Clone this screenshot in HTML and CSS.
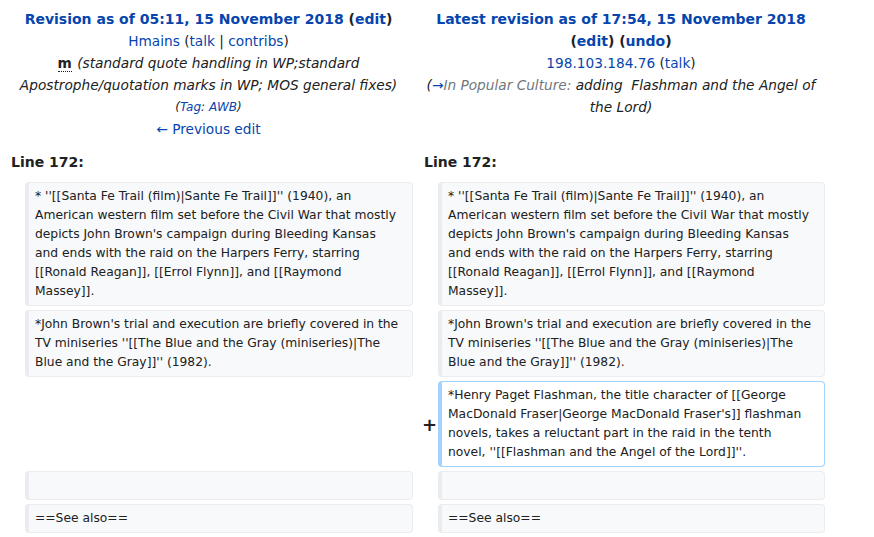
FILE: index.html
```html
<!DOCTYPE html>
<html lang="en">
<head>
<meta charset="utf-8">
<title>Diff</title>
<link rel="stylesheet" href="styles.css">
</head>
<body>
<div class="diff">
  <div class="title otitle">
    <div class="head"><a class="lnk">Revision as of 05:11, 15 November 2018</a> <span class="paren">(<a class="lnk">edit</a>)</span></div>
    <div><a class="lnk">Hmains</a> (<a class="lnk">talk</a> | <a class="lnk">contribs</a>)</div>
    <div class="comment"><abbr class="minor" title="This is a minor edit">m</abbr> <i>(standard quote handling in WP;standard Apostrophe/quotation marks in WP; MOS general fixes)</i></div>
    <div class="tags">(<a class="lnk">Tag</a>: <a class="lnk">AWB</a>)</div>
    <div><a class="lnk">← Previous edit</a></div>
  </div>
  <div class="title ntitle">
    <div class="head"><a class="lnk">Latest revision as of 17:54, 15 November 2018</a> <span class="paren">(<a class="lnk">edit</a>)</span> <span class="paren">(<a class="lnk">undo</a>)</span></div>
    <div><a class="lnk">198.103.184.76</a> (<a class="lnk">talk</a>)</div>
    <div class="comment"><i>(<a class="lnk">→</a><span class="autocomment">In Popular Culture:</span> adding&nbsp; Flashman and the Angel of the Lord)</i></div>
  </div>

  <div class="lineno">Line 172:</div>
  <div class="lineno">Line 172:</div>

  <div class="marker"></div>
  <div class="line context">* ''[[Santa Fe Trail (film)|Sante Fe Trail]]'' (1940), an American western film set before the Civil War that mostly depicts John Brown's campaign during Bleeding Kansas and ends with the raid on the Harpers Ferry, starring [[Ronald Reagan]], [[Errol Flynn]], and [[Raymond Massey]].</div>
  <div class="marker"></div>
  <div class="line context">* ''[[Santa Fe Trail (film)|Sante Fe Trail]]'' (1940), an American western film set before the Civil War that mostly depicts John Brown's campaign during Bleeding Kansas and ends with the raid on the Harpers Ferry, starring [[Ronald Reagan]], [[Errol Flynn]], and [[Raymond Massey]].</div>

  <div class="marker"></div>
  <div class="line context">*John Brown's trial and execution are briefly covered in the TV miniseries ''[[The Blue and the Gray (miniseries)|The Blue and the Gray]]'' (1982).</div>
  <div class="marker"></div>
  <div class="line context">*John Brown's trial and execution are briefly covered in the TV miniseries ''[[The Blue and the Gray (miniseries)|The Blue and the Gray]]'' (1982).</div>

  <div class="empty"></div>
  <div class="marker"><span class="plus">+</span></div>
  <div class="line added">*Henry Paget Flashman, the title character of [[George MacDonald Fraser|George MacDonald Fraser's]] flashman novels, takes a reluctant part in the raid in the tenth novel, ''[[Flashman and the Angel of the Lord]]''.</div>

  <div class="marker"></div>
  <div class="line context">&nbsp;</div>
  <div class="marker"></div>
  <div class="line context">&nbsp;</div>

  <div class="marker"></div>
  <div class="line context">==See also==</div>
  <div class="marker"></div>
  <div class="line context">==See also==</div>
</div>
</body>
</html>
```

FILE: styles.css
```css
html, body {
  margin: 0;
  padding: 0;
  background: #ffffff;
}
body {
  font-family: "DejaVu Sans", sans-serif;
  color: #202122;
  font-size: 13.7px;
}
.diff {
  display: grid;
  grid-template-columns: 17px 388px 17px 387px;
  column-gap: 4px;
  row-gap: 4px;
  padding: 4px;
  width: 829px;
  box-sizing: border-box;
}
.lnk {
  color: #0645ad;
  text-decoration: none;
}
.title {
  grid-column: span 2;
  text-align: center;
  line-height: 22px;
  padding: 4px 6px 4px;
}
.head {
  font-weight: bold;
  font-size: 14px;
}
.paren {
  color: #202122;
}
.comment i {
  font-style: italic;
}
.minor {
  font-weight: bold;
  text-decoration: none;
  border-bottom: 1px dotted #202122;
  cursor: help;
  margin-right: 1px;
}
.tags {
  font-style: italic;
  font-size: 12px;
}
.autocomment {
  color: #72777d;
}
.lineno {
  grid-column: span 2;
  font-weight: bold;
  font-size: 14px;
  line-height: 20px;
  padding: 4px 7px 6px;
}
.marker {
  font-weight: bold;
  font-size: 18px;
  display: flex;
  align-items: center;
  justify-content: flex-end;
}
.plus {
  margin-right: -3px;
}
.empty {
  grid-column: span 2;
}
.line {
  font-size: 12.3px;
  line-height: 19px;
  padding: 4px 11px 4px 6px;
  border-style: solid;
  border-width: 1px 1px 1px 4px;
  border-radius: 4px;
  overflow-wrap: break-word;
}
.context {
  background: #f8f9fa;
  border-color: #eaecf0;
}
.added {
  background: #ffffff;
  border-color: #a3d3ff;
  padding-right: 14px;
}
```
